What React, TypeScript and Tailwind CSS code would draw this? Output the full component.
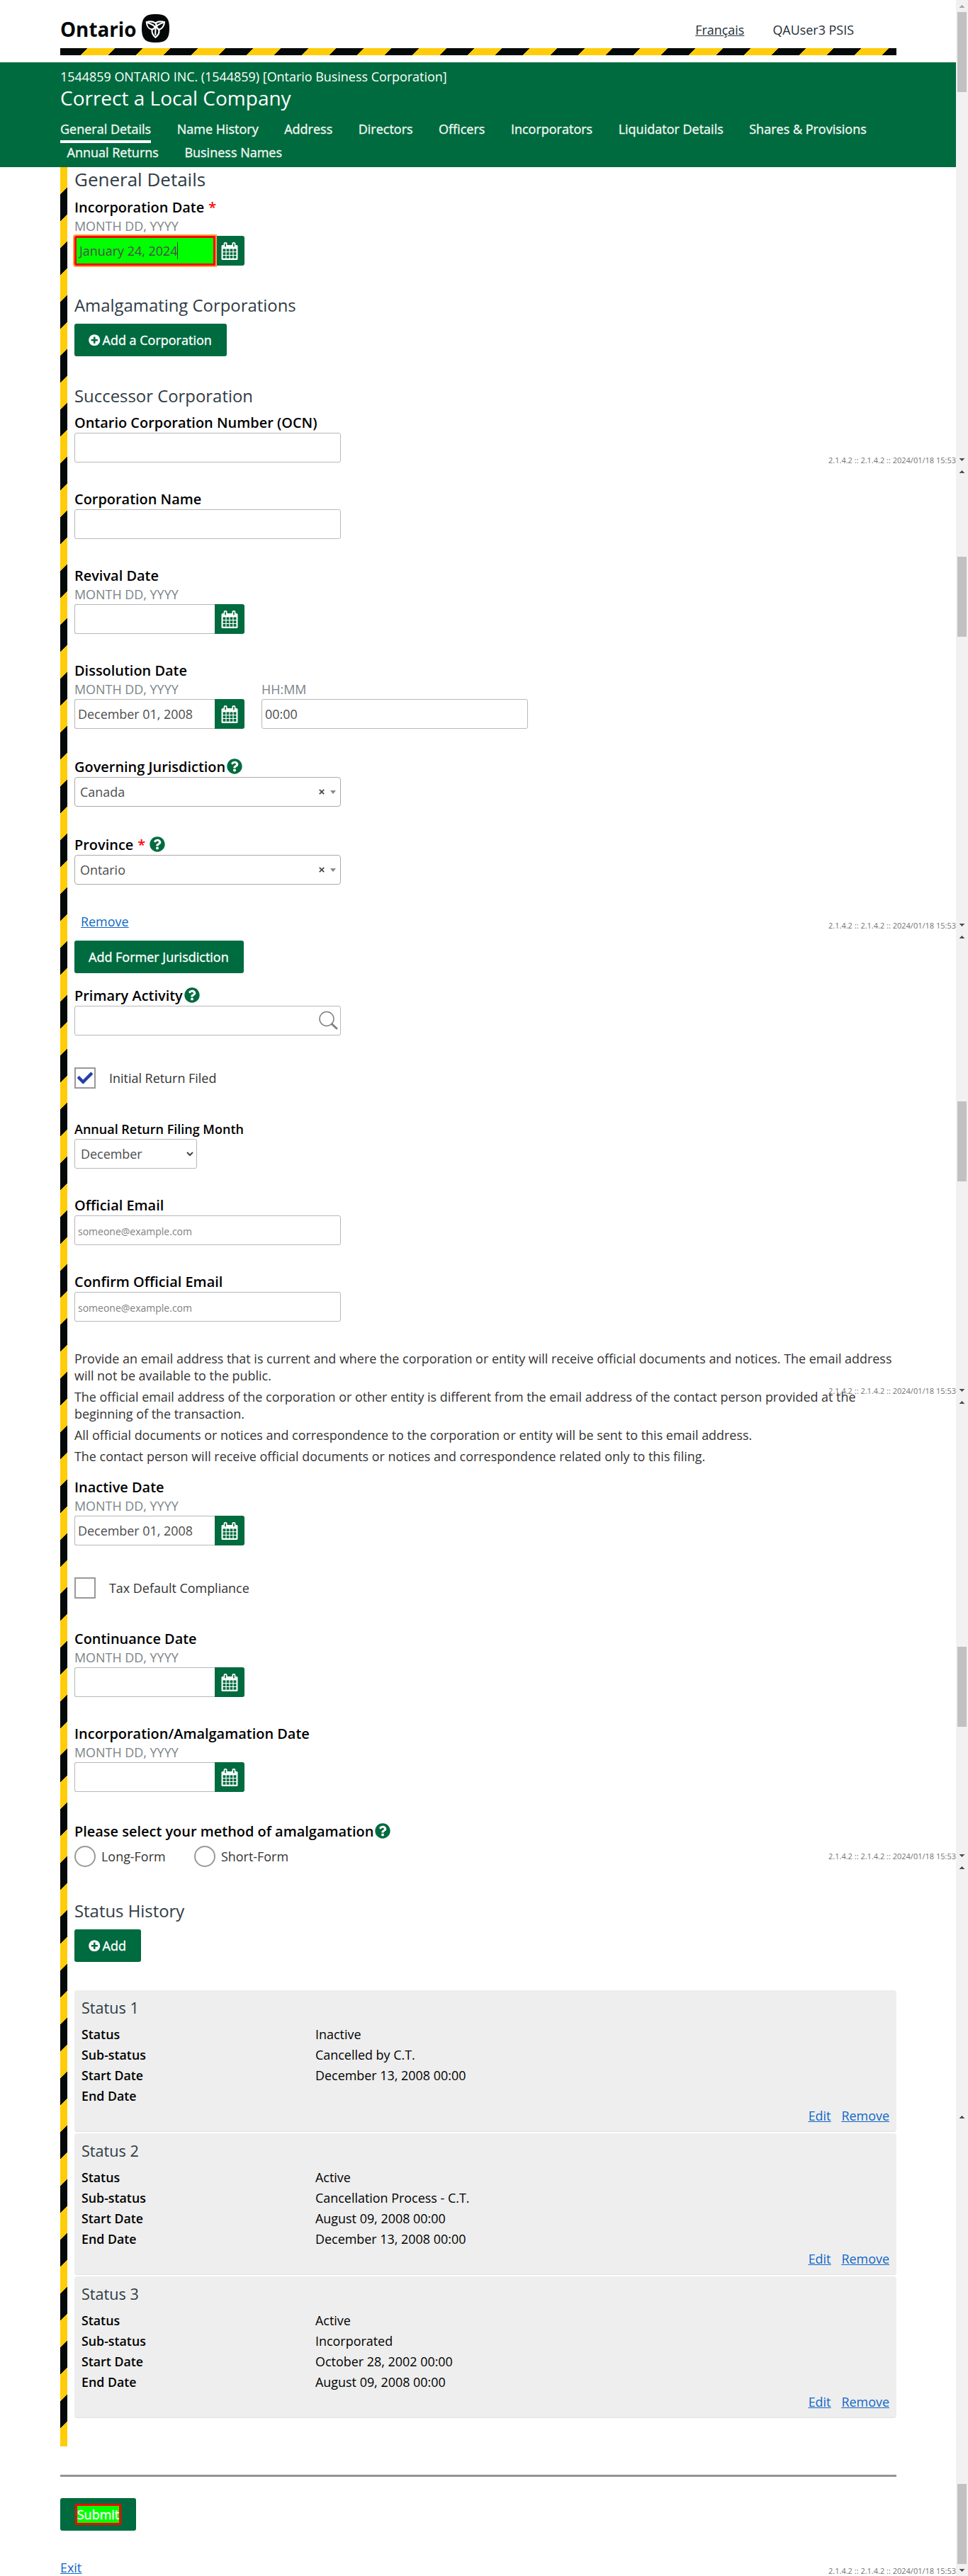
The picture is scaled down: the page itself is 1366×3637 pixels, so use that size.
import React from 'react';
import { FaPlusCircle, FaQuestionCircle, FaCheck } from 'react-icons/fa';

type Children = { children?: React.ReactNode };

function OntarioLogo() {
  return (
    <div className="flex h-[40px] items-center gap-[8px]">
      <span className="relative top-[1px] block w-[107px] whitespace-nowrap text-[27.8px] font-bold leading-[40px] text-[#030808]">Ontario</span>
      <svg width="39" height="40" viewBox="0 0 39 40">
        <path d="M19.5 0C34 0 39 5 39 20S34 40 19.5 40 0 35 0 20 5 0 19.5 0Z" fill="#030808" />
        <g fill="none" stroke="#fff" strokeWidth="2.1" strokeLinejoin="round" strokeLinecap="round">
          <path d="M18.5 17.5C16 14.5 12 13.5 6.8 11.2C7 16 9.5 20.5 13.8 21.5C16.5 21.5 18 20 18.5 17.5Z" />
          <path d="M6.8 11.2C11 10 15.5 10 19.5 12.6C23 10 27.5 10 32 11.2C31.8 16 29 20.5 25 21.7" />
          <path d="M32 11.2C27 13 23.5 14 21 17.2C21.5 20 23 21.5 25 21.7" />
          <path d="M14.6 21.6C14 26 16 30 19.3 32.8C23 30 25.6 26 24 21.5C22.5 20 21 19 19.5 17.2" />
          <path d="M19.4 17.5C19.8 22 19 26 19.3 29" />
          <path d="M19.5 12.8C21 14.5 21 16 19.6 17.5" />
        </g>
      </svg>
    </div>
  );
}

function CalendarButton() {
  return (
    <span className="flex h-[42px] w-[42px] shrink-0 items-center justify-center rounded-r-[3px] bg-[#006b3f]">
      <svg width="24" height="25" viewBox="0 0 24 25">
        <rect x="0.5" y="4" width="23" height="21" rx="1.6" fill="#fff" />
        <rect x="3.6" y="0" width="5" height="8" rx="2" fill="#fff" />
        <rect x="15.4" y="0" width="5" height="8" rx="2" fill="#fff" />
        <rect x="5.3" y="1.8" width="1.6" height="4.6" fill="#006b3f" />
        <rect x="17.1" y="1.8" width="1.6" height="4.6" fill="#006b3f" />
        {[9.4, 14.2, 19].map((y) =>
          [2.6, 7.6, 12.6, 17.6].map((x) => <rect key={`${x}-${y}`} x={x} y={y} width="3.8" height="3.7" fill="#006b3f" />),
        )}
      </svg>
    </span>
  );
}

function Label({ children, small }: Children & { small?: boolean }) {
  return (
    <div className={`flex h-[26px] items-center whitespace-nowrap pt-[2px] font-semibold leading-[26px] text-black ${small ? 'text-[18px]' : 'text-[19.95px]'}`}>
      {children}
    </div>
  );
}

const Help = () => <FaQuestionCircle className="mb-[2px] ml-[2px] h-[22px] w-[22px] text-[#006b3f]" />;
const Required = () => <span className="ml-[6px] text-[#ff0000]">*</span>;

function Hint({ children }: Children) {
  return <div className="mt-[2px] h-[24px] leading-[24px] text-[#7b8487]">{children}</div>;
}

function DateInput({ value, marked }: { value?: string; marked?: boolean }) {
  return (
    <div className="mt-[2px] flex h-[42px]">
      {marked ? (
        <div className="z-10 mr-[-1px] h-[42px] w-[199px] rounded-l-[2px] border-[3px] border-[#ff0000] bg-[#00ff00] pl-[4px] leading-[37px] text-[#4d4d4d] outline-2 outline-[#f9a13f]">
          <span className="inline-block h-[24px] border-r border-[#333] leading-[24px]">{value}</span>
        </div>
      ) : (
        <div className="h-[42px] w-[198px] rounded-l-[3px] border border-r-0 border-[#b8b8b8] pl-[4px] leading-[41px] text-[#4d4d4d]">{value}</div>
      )}
      <CalendarButton />
    </div>
  );
}

function DateField({ label, required, value, marked }: { label: string; required?: boolean; value?: string; marked?: boolean }) {
  return (
    <div>
      <Label>{label}{required && <Required />}</Label>
      <Hint>MONTH DD, YYYY</Hint>
      <DateInput value={value} marked={marked} />
    </div>
  );
}

function TextBox({ children }: Children) {
  return (
    <div className="mt-[2px] flex h-[42px] w-[376px] items-center rounded-[3px] border border-[#b8b8b8] pl-[4px] text-[#4d4d4d]">{children}</div>
  );
}

function SelectBox({ value }: { value: string }) {
  return (
    <div className="mt-[2px] flex h-[42px] w-[376px] items-center justify-between rounded-[4px] border border-[#aaa] pl-[7px] pr-[6px] text-[#4d4d4d]">
      <span>{value}</span>
      <span className="flex items-center">
        <svg width="8" height="8" viewBox="0 0 8 8" className="mr-[8px]">
          <path d="M0.8 0.8L7.2 7.2M7.2 0.8L0.8 7.2" stroke="#444" strokeWidth="1.7" />
        </svg>
        <svg width="8" height="5" viewBox="0 0 8 5">
          <path d="M0 0H8L4 5Z" fill="#888" />
        </svg>
      </span>
    </div>
  );
}

function Button({ children }: Children) {
  return (
    <button className="flex h-[46px] items-center whitespace-nowrap rounded-[3px] bg-[#006b3f] pl-[20px] pr-[21px] text-[18px] text-white [-webkit-text-stroke:0.35px_white]">
      {children}
    </button>
  );
}

const Plus = () => <FaPlusCircle className="mr-[3px] h-[16.5px] w-[16.5px]" />;

function Check({ label, checked }: { label: string; checked?: boolean }) {
  return (
    <div className="flex h-[30px] items-center text-[#333]">
      <span className="mr-[19px] flex h-[30px] w-[30px] items-center justify-center border-2 border-[#999]">
        {checked && <FaCheck className="h-[22px] w-[22px] text-[#2440a8]" />}
      </span>
      {label}
    </div>
  );
}

function SubHeading({ children }: Children) {
  return <h2 className="h-[32px] text-[23.9px] leading-[32px] text-[#2f3c45]">{children}</h2>;
}

const statuses = [
  { status: 'Inactive', sub: 'Cancelled by C.T.', start: 'December 13, 2008 00:00', end: '' },
  { status: 'Active', sub: 'Cancellation Process - C.T.', start: 'August 09, 2008 00:00', end: 'December 13, 2008 00:00' },
  { status: 'Active', sub: 'Incorporated', start: 'October 28, 2002 00:00', end: 'August 09, 2008 00:00' },
];

function StatusCard({ index, item }: { index: number; item: (typeof statuses)[number] }) {
  const rows = [
    ['Status', item.status],
    ['Sub-status', item.sub],
    ['Start Date', item.start],
    ['End Date', item.end],
  ];
  return (
    <div className="flex h-[200px] flex-col rounded-[4px] border-b border-[#e2e2e2] bg-[#eee] pl-[10px] pr-[10px] pt-[10px]">
      <h3 className="h-[29px] text-[21.6px] leading-[29px] text-[#2f3c45]">Status {index}</h3>
      <dl className="mt-[9px]">
        {rows.map(([k, v]) => (
          <div key={k} className="flex h-[29px] leading-[29px] text-black">
            <dt className="w-[330px] text-[17.8px] font-semibold">{k}</dt>
            <dd>{v}</dd>
          </div>
        ))}
      </dl>
      <div className="mt-[1px] flex h-[24px] justify-end gap-[15px] leading-[24px] text-[#0f67c6] underline">
        <a>Edit</a>
        <a>Remove</a>
      </div>
    </div>
  );
}

const Up = ({ light }: { light?: boolean }) => (
  <svg width="7" height="4" viewBox="0 0 7 4" className="mx-auto" shapeRendering="crispEdges">
    <path d="M3 0H4V1H5V2H6V3H7V4H0V3H1V2H2V1H3Z" fill={light ? '#a3a3a3' : '#505050'} />
  </svg>
);
const Down = () => (
  <svg width="7" height="4" viewBox="0 0 7 4" className="mx-auto" shapeRendering="crispEdges">
    <path d="M0 0H7V1H6V2H5V3H4V4H3V3H2V2H1V1H0Z" fill="#505050" />
  </svg>
);

const tracks = [
  { height: 657, thumb: 0 },
  { height: 657, thumb: 112 },
  { height: 657, thumb: 224 },
  { height: 657, thumb: 337 },
  { height: 352 },
  { height: 657, thumb: 510 },
];

function Scrollbars() {
  return (
    <div className="w-[17px] shrink-0 bg-[#f1f1f1]">
      {tracks.map((t, i) => (
        <div key={i} className="relative flex flex-col" style={{ height: t.height }}>
          <div className="flex h-[17px] items-center"><Up light={i === 0} /></div>
          {t.thumb !== undefined && (
            <>
              <div className="mx-auto h-[113px] w-[13px] shrink-0 bg-[#c1c1c1]" style={{ marginTop: t.thumb }} />
              <div className="mt-auto flex h-[17px] items-center"><Down /></div>
              <div className="absolute bottom-0 right-[17px] whitespace-nowrap text-[11px] leading-[15px] text-[#737373]">
                2.1.4.2 :: 2.1.4.2 :: 2024/01/18 15:53
              </div>
            </>
          )}
        </div>
      ))}
    </div>
  );
}

const navTop = ['General Details', 'Name History', 'Address', 'Directors', 'Officers', 'Incorporators', 'Liquidator Details', 'Shares & Provisions'];

export default function App() {
  return (
    <div className="flex h-[3637px] w-[1366px] bg-white font-['Open_Sans',sans-serif] text-[17.93px]">
      <div className="w-[1349px] shrink-0">
        <header className="h-[88px] px-[85px] pt-[20px]">
          <div className="flex h-[48px] w-[1180px] justify-between">
            <OntarioLogo />
            <div className="mr-[60px] mt-[10px] flex h-[24px] gap-[40px] leading-[24px] text-[#1f2e37]">
              <a className="underline">Français</a>
              <span>QAUser3 PSIS</span>
            </div>
          </div>
          <div className="h-[10px] w-[1180px] bg-[repeating-linear-gradient(135deg,#030808_0px,#030808_27.577px,#ffcc0a_27.577px,#ffcc0a_55.154px)] bg-[length:78px_10px]" />
        </header>

        <div className="h-[148px] bg-[#006b3f] px-[85px] pt-[8px] text-white">
          <div className="h-[24px] leading-[24px]">1544859 ONTARIO INC. (1544859) [Ontario Business Corporation]</div>
          <h1 className="h-[36px] text-[28px] leading-[36px]">Correct a Local Company</h1>
          <nav className="mt-[14px] text-[18px] text-[#f2f7f4] [-webkit-text-stroke:0.35px_#f2f7f4]">
            <div className="flex h-[33px] gap-[36.5px] whitespace-nowrap">
              {navTop.map((n, i) => (
                <a key={n} className={`h-[32px] leading-[24px] ${i === 0 ? 'border-b-4 border-white' : ''}`}>{n}</a>
              ))}
            </div>
            <div className="flex gap-[36.5px] whitespace-nowrap pl-[9.5px] leading-[24px]">
              <a>Annual Returns</a>
              <a>Business Names</a>
            </div>
          </nav>
        </div>

        <main className="ml-[85px] flex w-[1180px]">
          <div className="w-[10px] shrink-0 bg-[repeating-linear-gradient(135deg,#ffcc0a_0px,#ffcc0a_26.87px,#030808_26.87px,#030808_53.74px)] bg-[length:10px_76px] bg-[position:0px_1px]" />
          <div className="ml-[10px] w-[1160px] pb-[40px]">
            <h2 className="h-[34px] text-[26px] leading-[34px] text-[#2f3c45]">General Details</h2>
            <div className="mt-[9px]"><DateField label="Incorporation Date" required value="January 24, 2024" marked /></div>

            <div className="mt-[40px]"><SubHeading>Amalgamating Corporations</SubHeading></div>
            <div className="mt-[10px] flex"><Button><Plus />Add a Corporation</Button></div>

            <div className="mt-[40px]"><SubHeading>Successor Corporation</SubHeading></div>
            <div className="mt-[8px]"><Label>Ontario Corporation Number (OCN)</Label><TextBox /></div>
            <div className="mt-[38px]"><Label>Corporation Name</Label><TextBox /></div>
            <div className="mt-[38px]"><DateField label="Revival Date" /></div>
            <div className="mt-[38px] flex items-end gap-[24px]">
              <DateField label="Dissolution Date" value="December 01, 2008" />
              <div><Hint>HH:MM</Hint><TextBox><span>00:00</span></TextBox></div>
            </div>
            <div className="mt-[40px]"><Label>Governing Jurisdiction<Help /></Label><SelectBox value="Canada" /></div>
            <div className="mt-[40px]"><Label>Province<Required /><span className="w-[4px]" /><Help /></Label><SelectBox value="Ontario" /></div>
            <div className="mt-[40px] h-[24px] pl-[9px] leading-[24px] text-[#0f67c6] underline"><a>Remove</a></div>
            <div className="mt-[15px] flex"><Button>Add Former Jurisdiction</Button></div>

            <div className="mt-[18px]">
              <Label>Primary Activity<Help /></Label>
              <TextBox>
                <svg width="27" height="27" viewBox="0 0 27 27" className="mb-[2px] ml-auto mr-[3px]" fill="none" stroke="#7f7f7f">
                  <circle cx="11" cy="11.5" r="10" strokeWidth="1.5" />
                  <path d="M18.5 19L25 25" strokeWidth="3" strokeLinecap="round" />
                </svg>
              </TextBox>
            </div>
            <div className="mt-[45px]"><Check label="Initial Return Filed" checked /></div>

            <div className="mt-[43px]">
              <Label small>Annual Return Filing Month</Label>
              <div className="mt-[2px] flex h-[42px] w-[173px] items-center justify-between rounded-[3px] border border-[#b8b8b8] pl-[8px] pr-[4px] text-[#4d4d4d]">
                December
                <svg width="10" height="7" viewBox="0 0 10 7" fill="none"><path d="M1 1L5 5L9 1" stroke="#444" strokeWidth="2" /></svg>
              </div>
            </div>
            <div className="mt-[38px]"><Label>Official Email</Label><TextBox><span className="pt-[3px] text-[14px] text-[#808080]">someone@example.com</span></TextBox></div>
            <div className="mt-[38px]"><Label>Confirm Official Email</Label><TextBox><span className="pt-[3px] text-[14px] text-[#808080]">someone@example.com</span></TextBox></div>

            <div className="mt-[40px] flex flex-col gap-[6px] whitespace-nowrap leading-[24px] text-[#333]">
              <p>Provide an email address that is current and where the corporation or entity will receive official documents and notices. The email address<br />will not be available to the public.</p>
              <p>The official email address of the corporation or other entity is different from the email address of the contact person provided at the<br />beginning of the transaction.</p>
              <p>All official documents or notices and correspondence to the corporation or entity will be sent to this email address.</p>
              <p>The contact person will receive official documents or notices and correspondence related only to this filing.</p>
            </div>

            <div className="mt-[18px]"><DateField label="Inactive Date" value="December 01, 2008" /></div>
            <div className="mt-[45px]"><Check label="Tax Default Compliance" /></div>
            <div className="mt-[43px]"><DateField label="Continuance Date" /></div>
            <div className="mt-[38px]"><DateField label="Incorporation/Amalgamation Date" /></div>

            <div className="mt-[42px]"><Label>Please select your method of amalgamation<Help /></Label></div>
            <div className="mt-[8px] flex h-[30px] items-center text-[#333]">
              <span className="mr-[8px] h-[30px] w-[30px] rounded-full border-2 border-[#999]" />
              <span className="w-[131px]">Long-Form</span>
              <span className="mr-[8px] h-[30px] w-[30px] rounded-full border-2 border-[#999]" />
              <span>Short-Form</span>
            </div>

            <div className="mt-[46px]"><SubHeading>Status History</SubHeading></div>
            <div className="mt-[10px] flex"><Button><Plus />Add</Button></div>
            <div className="mt-[40px] flex flex-col gap-[2px]">
              {statuses.map((s, i) => <StatusCard key={i} index={i + 1} item={s} />)}
            </div>
          </div>
        </main>

        <footer className="px-[85px] pt-[40px]">
          <div className="h-[3px] w-[1180px] bg-[#949494]" />
          <div className="mt-[30px] flex">
            <button className="flex h-[46px] w-[107px] items-center justify-center rounded-[3px] bg-[#006b3f] text-[18px] text-white">
              <span className="flex h-[30px] w-[65px] items-center justify-center border-[3px] border-[#ff0000] bg-[#00ff00] leading-[24px] [-webkit-text-stroke:0.35px_white]">Submit</span>
            </button>
          </div>
          <div className="mt-[40px] h-[24px] leading-[24px] text-[#0f67c6] underline"><a>Exit</a></div>
        </footer>
      </div>
      <Scrollbars />
    </div>
  );
}
